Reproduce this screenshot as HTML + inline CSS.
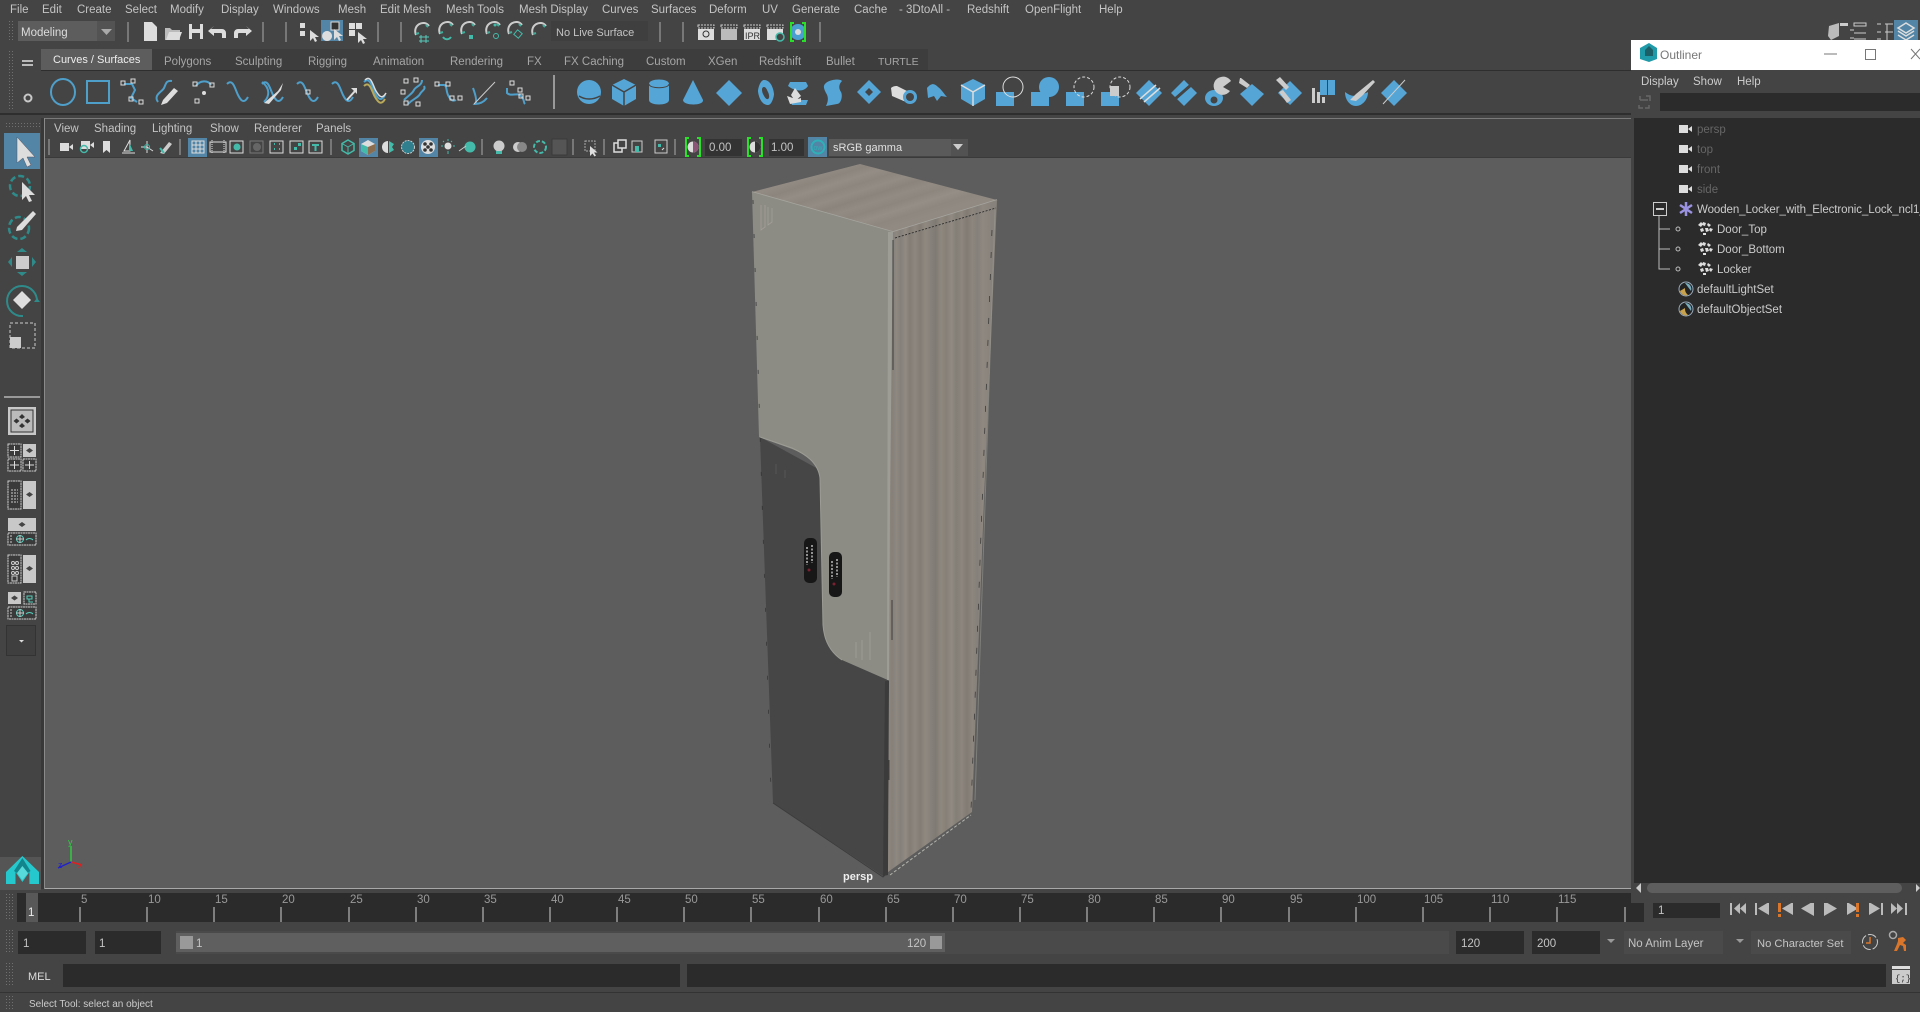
<!DOCTYPE html>
<html><head><meta charset="utf-8"><title>Maya</title>
<style>
html,body{margin:0;padding:0;width:1920px;height:1012px;overflow:hidden;background:#444}
body{position:relative;font-family:"Liberation Sans",sans-serif;font-size:11.5px;color:#c4c4c4}
.b{position:absolute}
.t{position:absolute;white-space:nowrap;line-height:14px}
.f{position:absolute;background:#2b2b2b}
.n{color:#a6a6a6}
svg{position:absolute;left:0;top:0}
</style></head><body>

<!-- viewport -->
<div class="b" style="left:45px;top:158px;width:1586px;height:730px;background:#5d5d5d"></div>
<div class="b" style="left:45px;top:888px;width:1586px;height:1px;background:#a8a8a8"></div>
<div class="b" style="left:44px;top:118px;width:1587px;height:1px;background:#7a7a7a"></div>
<div class="b" style="left:44px;top:118px;width:1px;height:771px;background:#8a8a8a"></div>
<div class="b" style="left:41px;top:118px;width:3px;height:771px;background:#383838"></div>
<div class="b" style="left:45px;top:157px;width:1586px;height:1px;background:#3a3a3a"></div>
<div class="b" style="left:0;top:857px;width:41px;height:33px;background:#555"></div>

<!-- shelf tab row -->
<div class="b" style="left:152px;top:49px;width:776px;height:21px;background:#3d3d3d"></div>
<div class="b" style="left:41px;top:49px;width:111px;height:21px;background:#5d5d5d"></div>
<div class="b" style="left:41px;top:70px;width:1590px;height:1px;background:#2e2e2e"></div>
<div class="b" style="left:0;top:113px;width:1631px;height:2px;background:#2e2e2e"></div>
<div class="b" style="left:4px;top:133px;width:36px;height:36px;background:#5285a6"></div>
<div class="b" style="left:321px;top:20px;width:22px;height:21px;background:#5285a6"></div>
<div class="b" style="left:188px;top:138px;width:19px;height:19px;background:#5285a6"></div>
<div class="b" style="left:359px;top:138px;width:19px;height:19px;background:#5285a6"></div>
<div class="b" style="left:419px;top:138px;width:19px;height:19px;background:#5285a6"></div>
<div class="b" style="left:808px;top:137px;width:19px;height:20px;background:#5285a6"></div>
<div class="b" style="left:1894px;top:20px;width:24px;height:20px;background:#5285a6"></div>

<!-- menu -->
<span class="t" style="left:10px;top:3px">File</span>
<span class="t" style="left:42px;top:3px">Edit</span>
<span class="t" style="left:77px;top:3px">Create</span>
<span class="t" style="left:125px;top:3px">Select</span>
<span class="t" style="left:170px;top:3px">Modify</span>
<span class="t" style="left:221px;top:3px">Display</span>
<span class="t" style="left:273px;top:3px">Windows</span>
<span class="t" style="left:338px;top:3px">Mesh</span>
<span class="t" style="left:380px;top:3px">Edit Mesh</span>
<span class="t" style="left:446px;top:3px">Mesh Tools</span>
<span class="t" style="left:519px;top:3px">Mesh Display</span>
<span class="t" style="left:602px;top:3px">Curves</span>
<span class="t" style="left:651px;top:3px">Surfaces</span>
<span class="t" style="left:709px;top:3px">Deform</span>
<span class="t" style="left:762px;top:3px">UV</span>
<span class="t" style="left:792px;top:3px">Generate</span>
<span class="t" style="left:854px;top:3px">Cache</span>
<span class="t" style="left:899px;top:3px">- 3DtoAll -</span>
<span class="t" style="left:967px;top:3px">Redshift</span>
<span class="t" style="left:1025px;top:3px">OpenFlight</span>
<span class="t" style="left:1099px;top:3px">Help</span>

<!-- status line widgets -->
<div class="b" style="left:18px;top:21px;width:79px;height:20px;background:#5d5d5d"></div>
<div class="b" style="left:97px;top:21px;width:18px;height:20px;background:#535353"></div>
<span class="t" style="left:21px;top:26px;color:#ddd">Modeling</span>
<div class="b" style="left:551px;top:21px;width:97px;height:20px;background:#3f3f3f"></div>
<span class="t" style="left:556px;top:26px;font-size:11px">No Live Surface</span>

<!-- tabs -->
<span class="t" style="left:53px;top:53px;color:#eee;font-size:11px">Curves / Surfaces</span>
<span class="t n" style="left:164px;top:55px">Polygons</span>
<span class="t n" style="left:235px;top:55px">Sculpting</span>
<span class="t n" style="left:308px;top:55px">Rigging</span>
<span class="t n" style="left:373px;top:55px">Animation</span>
<span class="t n" style="left:450px;top:55px">Rendering</span>
<span class="t n" style="left:527px;top:55px">FX</span>
<span class="t n" style="left:564px;top:55px">FX Caching</span>
<span class="t n" style="left:646px;top:55px">Custom</span>
<span class="t n" style="left:708px;top:55px">XGen</span>
<span class="t n" style="left:759px;top:55px">Redshift</span>
<span class="t n" style="left:826px;top:55px">Bullet</span>
<span class="t n" style="left:878px;top:55px;font-size:10.5px">TURTLE</span>

<!-- panel menu -->
<span class="t" style="left:54px;top:122px">View</span>
<span class="t" style="left:94px;top:122px">Shading</span>
<span class="t" style="left:152px;top:122px">Lighting</span>
<span class="t" style="left:210px;top:122px">Show</span>
<span class="t" style="left:254px;top:122px">Renderer</span>
<span class="t" style="left:316px;top:122px">Panels</span>

<!-- panel toolbar fields -->
<div class="f" style="left:705px;top:139px;width:37px;height:17px;background:#333"></div>
<span class="t" style="left:709px;top:141px">0.00</span>
<div class="f" style="left:769px;top:139px;width:35px;height:17px;background:#333"></div>
<span class="t" style="left:771px;top:141px">1.00</span>
<div class="b" style="left:829px;top:139px;width:122px;height:17px;background:#5a5a5a"></div>
<div class="b" style="left:951px;top:139px;width:17px;height:17px;background:#525252"></div>
<span class="t" style="left:833px;top:141px;color:#e0e0e0;font-size:11px">sRGB gamma</span>

<!-- timeline -->
<div class="f" style="left:17px;top:893px;width:1627px;height:29px"></div>
<div class="b" style="left:26px;top:893px;width:12px;height:29px;background:#585858"></div>
<span class="t" style="left:28px;top:906px;color:#eee">1</span>

<svg width="1920" height="1012" viewBox="0 0 1920 1012" font-family="Liberation Sans, sans-serif">
<defs>
<pattern id="dots" width="3" height="3" patternUnits="userSpaceOnUse"><rect width="1" height="1" fill="#707070"/></pattern>
<linearGradient id="wood" gradientUnits="userSpaceOnUse" x1="888" y1="0" x2="992" y2="0">
<stop offset="0" stop-color="#8f8880"/><stop offset=".04" stop-color="#86807a"/><stop offset=".08" stop-color="#8e8880"/><stop offset=".12" stop-color="#85807a"/><stop offset=".17" stop-color="#918a83"/><stop offset=".21" stop-color="#837d76"/><stop offset=".26" stop-color="#8e877f"/><stop offset=".31" stop-color="#827c75"/><stop offset=".36" stop-color="#8f8980"/><stop offset=".41" stop-color="#86817a"/><stop offset=".46" stop-color="#7f7a73"/><stop offset=".51" stop-color="#8e887f"/><stop offset=".56" stop-color="#868078"/><stop offset=".61" stop-color="#908a82"/><stop offset=".66" stop-color="#837e76"/><stop offset=".71" stop-color="#8d867e"/><stop offset=".76" stop-color="#817b74"/><stop offset=".81" stop-color="#8c867e"/><stop offset=".86" stop-color="#85807a"/><stop offset=".91" stop-color="#8f8880"/><stop offset="1" stop-color="#87827b"/>
</linearGradient>
<linearGradient id="topw" gradientUnits="userSpaceOnUse" x1="846" y1="165" x2="868" y2="235">
<stop offset="0" stop-color="#928b83"/><stop offset=".1" stop-color="#8b857d"/><stop offset=".2" stop-color="#948d85"/><stop offset=".3" stop-color="#8c867e"/><stop offset=".4" stop-color="#938c84"/><stop offset=".5" stop-color="#8a847c"/><stop offset=".6" stop-color="#928b83"/><stop offset=".7" stop-color="#8c867e"/><stop offset=".8" stop-color="#958e86"/><stop offset=".9" stop-color="#8d877f"/><stop offset="1" stop-color="#918a82"/>
</linearGradient>
<g id="cam"><rect x="-6" y="-4" width="9" height="8" fill="#ddd"/><path d="M3 0l4-3v6z" fill="#ddd"/></g>
<g id="sq"><rect x="-2" y="-2" width="4" height="4" fill="none" stroke="#ddd"/></g>
<g id="wave"><path d="M-11 -8C-5 -14 -3 -3 0 3S6 12 10 5" fill="none" stroke="#4f9fcb" stroke-width="2"/></g>
<g id="mag"><path d="M-6 4C-10 -6 2 -12 7 -5" fill="none" stroke="#ccc" stroke-width="2"/><path d="M-6 3l3-1M4 -6l2 2" stroke="#4a9" stroke-width="2"/></g>
<g id="clap"><rect x="-8" y="-8" width="16" height="3" fill="none" stroke="#ccc" stroke-dasharray="2 1"/><rect x="-8" y="-4" width="16" height="11" fill="#ddd"/></g>
<g id="mesh"><path d="M-7 -4l3-3 2 2-2 3zM-2 -7l3 1-1 3-3-1zM3 -6l3 2-2 2-2-2zM-5 0l3-1 1 3-3 1zM0 -1l3 0 1 3-3 1zM5 -1l3 1-2 3-2-2zM-2 4l3 0 0 2-3 0z" fill="#ddd"/></g>
<g id="setic"><circle r="7" fill="#222" stroke="#9ab" stroke-width="1"/><path d="M-6 2a6 6 0 0 0 8 4 8 8 0 0 1-3-7z" fill="#c9a24d"/><path d="M-1 -6a6 6 0 0 1 6 8z" fill="#7ab"/></g>
<g id="brk"><path d="M-4 -9h-3v18h3M4 -9h3v18h-3" fill="none" stroke="#2be02b" stroke-width="2"/></g>
</defs>

<!-- grips -->
<g fill="url(#dots)">
<rect x="7" y="20" width="8" height="22"/><rect x="7" y="50" width="8" height="60"/>
<rect x="4" y="123" width="36" height="5"/><rect x="6" y="893" width="8" height="28"/><rect x="6" y="930" width="8" height="24"/><rect x="6" y="962" width="8" height="25"/><rect x="6" y="995" width="8" height="14"/>
</g>
<rect x="22" y="60" width="11" height="2" fill="#bbb"/><rect x="22" y="64" width="11" height="2" fill="#bbb"/>
<circle cx="28" cy="98" r="3.5" fill="none" stroke="#c8c8c8" stroke-width="2"/>

<!-- status icons -->
<path d="M101 29h11l-5.500 6z" fill="#aaa"/>
<g stroke="#777" stroke-width="2"><path d="M128 22v20M263 22v20M286 22v20M378 22v20M401 22v20M660 22v20M683 22v20M820 22v20"/></g>
<path d="M144 22h8l5 5v14h-13z" fill="#ddd"/>
<path d="M165 28h5l2 2h8v10h-15z" fill="#bbb"/><path d="M166 40l3-8h13l-3 8z" fill="#ddd"/>
<path d="M189 24h14v15h-14z" fill="#ddd"/><rect x="192" y="24" width="8" height="5" fill="#444"/><rect x="192" y="33" width="8" height="6" fill="#444"/>
<path d="M211 29h11a4 4 0 0 1 4 4v5h-4v-4a1 1 0 0 0-1-1h-7v3l-6-5 6-5z" fill="#ddd"/>
<path d="M249 29h-11a4 4 0 0 0-4 4v5h4v-4a1 1 0 0 1 1-1h7v3l6-5-6-5z" fill="#ddd"/>
<g fill="#ddd"><rect x="300" y="23" width="5" height="5"/><rect x="300" y="31" width="5" height="5"/><path d="M310 30v11l3-3 2 4 2-1-2-4h4z"/>
<path d="M327 31a5 5 0 1 0 .1 0z"/><path d="M331 22h8v8h-8z" fill="#333" stroke="#ddd"/><path d="M334 29v11l3-3 2 4 2-1-2-4h4z"/>
<rect x="349" y="23" width="6" height="6"/><rect x="356" y="23" width="6" height="6"/><rect x="349" y="30" width="6" height="6"/><path d="M358 32v11l3-3 2 4 2-1-2-4h4z"/></g>
<use href="#mag" x="422" y="31"/><use href="#mag" x="446" y="30"/><use href="#mag" x="468" y="30"/><use href="#mag" x="493" y="30"/><use href="#mag" x="515" y="30"/><use href="#mag" x="539" y="31"/>
<path d="M419 37h10M419 41h10M421 35v8M426 35v8" stroke="#5cb" fill="none"/>
<path d="M443 37c2 3 6 3 8 0" stroke="#4ba" stroke-width="2" fill="none"/><rect x="469" y="35" width="4" height="4" fill="#4ba"/><circle cx="496" cy="36" r="2.500" fill="none" stroke="#4ba"/><circle cx="495" cy="25" r="1.500" fill="#4ba"/><rect x="515" y="31" width="6" height="6" fill="none" stroke="#4ba" transform="rotate(40 518 34)"/>
<use href="#clap" x="706" y="33"/><use href="#clap" x="729" y="33"/><use href="#clap" x="752" y="33"/><use href="#clap" x="775" y="33"/>
<circle cx="706" cy="34" r="3" fill="none" stroke="#333"/><text x="745" y="39" font-size="9" fill="#333">IPR</text>
<rect x="721" y="29" width="16" height="11" fill="#bbb"/>
<circle cx="780" cy="37" r="4" fill="#444" stroke="#4ba" stroke-width="1.500"/>
<circle cx="798" cy="32" r="8" fill="#4a9fd0"/><circle cx="798" cy="32" r="3" fill="#ddd"/><use href="#brk" x="798" y="32"/>

<!-- top right icons -->
<path d="M1829 26l10-3v13l-8 4-3-4z" fill="#bbb"/><path d="M1840 23h8v3h-8z" fill="#ccc"/>
<g stroke="#ccc" fill="none"><path d="M1854 26h12v-3h-12zM1854 33h12M1854 39h12M1850 30h4M1850 38h4"/><path d="M1877 24h4M1877 32h4M1877 39h4M1885 24h8M1885 32h8M1887 24v16"/></g>
<path d="M1906 23l8 5-8 5-8-5zM1898 31l8 5 8-5M1898 35l8 5 8-5" fill="none" stroke="#ddd" stroke-width="1.500"/>

<!-- shelf: curves -->
<ellipse cx="63" cy="92" rx="12" ry="13" fill="none" stroke="#4f9fcb" stroke-width="2"/>
<rect x="87" y="81" width="22" height="22" fill="none" stroke="#4f9fcb" stroke-width="2"/>
<path d="M124 84h8l3 6-4 8 6 4" fill="none" stroke="#4f9fcb" stroke-width="2"/><use href="#sq" x="123" y="83"/><use href="#sq" x="133" y="81"/><use href="#sq" x="131" y="99"/><use href="#sq" x="141" y="102"/>
<path d="M158 102c-5-7 4-10 6-14s2-8 8-7" fill="none" stroke="#4f9fcb" stroke-width="2"/><path d="M163 100l11-12 4 3-11 12-6 2z" fill="#ddd"/>
<path d="M196 86c4-6 12-6 15-1" fill="none" stroke="#4f9fcb" stroke-width="2"/><use href="#sq" x="195" y="84"/><use href="#sq" x="212" y="85"/><use href="#sq" x="197" y="101"/><circle cx="204" cy="93" r="2" fill="#ddd"/>
<use href="#wave" x="238" y="92"/>
<use href="#wave" x="273" y="92"/><path d="M264 103l14-12 5-8-2 7-12 14z" fill="#ddd"/><path d="M262 82c8 6 8 14 2 20" fill="none" stroke="#4f9fcb" stroke-width="2"/>
<use href="#wave" x="308" y="92"/><use href="#sq" x="308" y="92"/>
<use href="#wave" x="343" y="92"/><path d="M347 100l8-9" stroke="#ddd" stroke-width="2"/><path d="M351 88h6v6z" fill="#ddd"/>
<use href="#wave" x="375" y="90"/><path d="M364 86C370 80 372 92 375 97S381 106 385 99" fill="none" stroke="#b9a95a" stroke-width="2"/><path d="M365 80C371 74 373 86 376 91S382 100 386 93" fill="none" stroke="#ddd" stroke-width="1.500"/>
<path d="M404 100c6-6 8-6 10-10s8-4 8-10M408 104c6-6 10-6 12-10s6-4 4-8" fill="none" stroke="#4f9fcb" stroke-width="2"/><use href="#sq" x="406" y="81"/><use href="#sq" x="416" y="80"/><use href="#sq" x="403" y="92"/><use href="#sq" x="406" y="103"/><use href="#sq" x="418" y="104"/>
<path d="M438 85h6c3 0 2 6 4 10s4 7 8 5" fill="none" stroke="#4f9fcb" stroke-width="2"/><use href="#sq" x="437" y="84"/><use href="#sq" x="448" y="84"/><use href="#sq" x="452" y="98"/><use href="#sq" x="460" y="98"/>
<path d="M473 88c3 8 4 14 2 16 4 0 8-1 12-6" fill="none" stroke="#4f9fcb" stroke-width="2"/><path d="M474 104L495 82" stroke="#ccc"/>
<path d="M507 88v5c4 4 10-1 14 3 4 4 2 6 4 8" fill="none" stroke="#4f9fcb" stroke-width="2"/><use href="#sq" x="512" y="83"/><use href="#sq" x="520" y="90"/><use href="#sq" x="521" y="96"/><use href="#sq" x="528" y="98"/>
<rect x="553" y="75" width="2" height="34" fill="#999"/>

<!-- shelf: polys -->
<g fill="#55a6d6">
<circle cx="589" cy="92" r="12"/>
<path d="M624 79l12 6v14l-12 7-12-7V85z"/>
<path d="M649 84c0-6 20-6 20 0v16c0 6-20 6-20 0z"/>
<path d="M693 80l10 20c1 6-20 6-20 0z"/>
<path d="M729 80l13 13-13 13-13-13z"/>
<path fill-rule="evenodd" d="M764 80c8 0 10 12 10 14s-2 11-6 11c-8 0-10-12-10-14s2-11 6-11zm0 7c-3 0-2 5-1 7s3 6 5 5 1-5 0-7-2-5-4-5z"/>
<path d="M790 82h16l2 4c-4 6-12 6-20 0zM790 100h18l-2 5h-14z"/>
<path d="M825 84c3-4 14-6 17-3-4 4-3 8-1 11 2 4 0 12-4 12l-11 2c3-6 2-10 0-13-2-4-3-7-1-9z"/>
<path d="M869 80l12 12-12 12-12-12zm0 8l-4 4 4 4 4-4z" fill-rule="evenodd"/>
<path d="M891 88a8 8 0 0 1 6-2l14 7-5 9-14-6z" fill="#ddd"/><circle cx="910" cy="97" r="7"/>
<path d="M927 88c5-6 8-4 11-1 4 3 6 7 9 10l-6-1-4 5-3-5-6 2z"/>
<path d="M973 79l12 6v14l-12 7-12-7V85z"/>
<rect x="996" y="92" width="18" height="14"/><rect x="1031" y="92" width="18" height="14"/><circle cx="1049" cy="87" r="10"/><rect x="1066" y="92" width="18" height="14"/><rect x="1101" y="92" width="18" height="14"/>
<path d="M1149 80l13 13-13 13-13-13z"/><path d="M1184 80l13 13-13 13-13-13z"/>
<ellipse cx="1214" cy="98" rx="9" ry="8"/>
<path d="M1252 84l12 10-12 12-12-12z"/><path d="M1290 81l12 12-12 12-12-12z"/>
<rect x="1320" y="80" width="7" height="15"/><rect x="1328" y="80" width="7" height="15"/>
<path d="M1345 92c4 3 8 5 12 3 2 0 7-1 11-3 0 8-6 14-12 14s-11-6-11-14z"/>
<path d="M1394 80l13 13-13 13-13-13z"/>
</g>
<g fill="#444"><circle cx="910" cy="97" r="4"/><circle cx="1214" cy="100" r="3.500"/></g>
<g fill="none" stroke="#ddd">
<path d="M579 96c6 4 14 4 21 0" stroke="#444" stroke-width="1.500"/>
<path d="M624 92v14M624 92l-12-7M624 92l12-7" stroke="#444" stroke-width="1.500"/>
<path d="M649 84c0 5 20 5 20 0" stroke="#444"/>
<path d="M973 92v14M973 92l-12-7M973 92l12-7" stroke-width="1.500"/>
<circle cx="1013" cy="87" r="10"/>
<circle cx="1084" cy="87" r="10" stroke-dasharray="3 2"/><circle cx="1120" cy="87" r="10" stroke-dasharray="3 2"/>
<path d="M1140 99l16-14M1144 102l16-14" stroke-width="1.500"/>
<path d="M1175 99l16-14" stroke="#444" stroke-width="3"/>
<path d="M1383 104l22-24" stroke="#ccc"/>
</g>
<rect x="1110" y="86" width="9" height="10" fill="#ccc"/>
<path d="M795 88l6 8-6 5-4-6zM787 96c6 2 10 4 14 2v4l-11 2z" fill="#ddd"/>
<path fill-rule="evenodd" d="M1221 77a9 9 0 1 0 9 14l-7-4 8-6a9 9 0 0 0-10-4z" fill="#ccc"/>
<path d="M1241 78l9 7-3 3-8-5 1-5z" fill="#ccc"/>
<path d="M1276 80l10 10 3-3-9-10zM1279 92l8 11 4-3-8-10z" fill="#ccc"/>
<g fill="#ccc"><rect x="1312" y="88" width="3" height="15"/><rect x="1317" y="92" width="3" height="11"/><rect x="1322" y="97" width="3" height="6"/><path d="M1373 80l-17 14-6 6 6 1 6-5 13-14z"/></g>

<!-- panel tb icons -->
<g stroke="#777" stroke-width="2"><path d="M49 139v16M180 139v16M331 139v16M482 139v16M573 139v16M604 139v16M675 139v16"/></g>
<use href="#cam" x="66" y="147"/><use href="#cam" x="87" y="145"/><circle cx="84" cy="149" r="3.500" fill="none" stroke="#4ba" stroke-width="1.500"/>
<path d="M103 141h7v12l-3.500-3-3.500 3z" fill="#ddd"/>
<path d="M122 153h13M124 151l6-11v11z" fill="none" stroke="#ddd"/><path d="M129 142l4 9h-4z" fill="#4ba"/>
<path d="M147 141v12M147 147h-6M147 147l6 4" stroke="#ddd" fill="none"/><circle cx="147" cy="147" r="2.500" fill="none" stroke="#4ba"/>
<path d="M160 153l9-11 3 2-8 10z" fill="#ccc"/><path d="M160 148l4 5" stroke="#4ba" stroke-width="2"/>
<g fill="none" stroke="#ddd"><rect x="192" y="141" width="12" height="12"/><path d="M196 141v12M200 141v12M192 145h12M192 149h12"/>
<rect x="210" y="142" width="16" height="10"/><path d="M212 140v14M224 140v14" stroke-dasharray="1 1"/>
<rect x="230" y="141" width="13" height="12"/><rect x="250" y="141" width="13" height="12" stroke="#777"/>
<rect x="270" y="141" width="13" height="12"/><rect x="290" y="141" width="13" height="12"/><rect x="309" y="141" width="13" height="12"/></g>
<circle cx="237" cy="147" r="3.500" fill="#4ba"/><circle cx="257" cy="147" r="4" fill="#666"/>
<path d="M274 144h1M279 144h1M274 149h1M279 149h1" stroke="#4ba" stroke-width="2"/><rect x="294" y="147" width="3" height="3" fill="#4ba"/><rect x="298" y="143" width="3" height="3" fill="#4ba"/>
<path d="M312 144h7v2h-2.500v5h-2v-5H312z" fill="#4ba"/>
<path d="M348 140l6 3.500v7l-6 3.500-6-3.500v-7z" fill="none" stroke="#4ba" stroke-width="1.500"/><path d="M348 147v7M348 147l-6-3.500M348 147l6-3.500" stroke="#4ba"/>
<path d="M368 140l7 4v7l-7 4-7-4v-7z" fill="#ddd"/><path d="M368 147v8l-7-4v-7z" fill="#4ba"/><path d="M368 147v8l7-4v-7z" fill="#8a6c4e"/>
<path d="M388 141a6 6 0 0 0 0 12z" fill="#ddd"/><path d="M389 141l5 3-2 3 2 3-5 3z" fill="#4ba"/>
<circle cx="408" cy="147" r="6.500" fill="#2f7f8f" stroke="#ccc" stroke-dasharray="2 1"/>
<circle cx="428" cy="147" r="7" fill="#ddd"/><g fill="#333"><circle cx="425" cy="144" r="1.800"/><circle cx="431" cy="144" r="1.800"/><circle cx="428" cy="147" r="1.800"/><circle cx="425" cy="150" r="1.800"/><circle cx="431" cy="150" r="1.800"/></g>
<circle cx="448" cy="146" r="3.500" fill="#ddd"/><path d="M441 146h2M453 146h2M448 139v2M448 151v3M443 141l1 1M452 141l-1 1" stroke="#4ba"/>
<circle cx="470" cy="147" r="5.500" fill="#4ba"/><path d="M459 151l7-5" stroke="#ccc"/>
<circle cx="499" cy="146" r="5.500" fill="#ccc"/><rect x="496" y="151" width="6" height="3" fill="#4ba"/>
<circle cx="518" cy="147" r="5" fill="#ccc"/><circle cx="522" cy="147" r="5" fill="#888"/>
<circle cx="540" cy="147" r="6" fill="none" stroke="#4ba" stroke-width="2" stroke-dasharray="4 2"/>
<rect x="552" y="139" width="15" height="16" fill="#555" stroke="#3a3a3a"/>
<rect x="585" y="141" width="10" height="10" fill="none" stroke="#aaa" stroke-dasharray="2 1"/><path d="M590 146v10l2.500-2.500 2 3 1.500-1-2-3h3.500z" fill="#ddd"/>
<rect x="614" y="143" width="8" height="9" fill="none" stroke="#ddd" stroke-width="1.500"/><rect x="618" y="140" width="8" height="8" fill="#444" stroke="#ddd" stroke-width="1.500"/>
<rect x="632" y="141" width="10" height="11" fill="none" stroke="#ccc"/><rect x="635" y="146" width="4" height="6" fill="#4ba"/>
<rect x="655" y="140" width="12" height="13" fill="none" stroke="#ccc"/><rect x="658" y="144" width="3" height="3" fill="#4ba"/><path d="M662 150l2-2" stroke="#ddd"/>
<circle cx="693" cy="147" r="5.500" fill="#ddd"/><path d="M693 141.500v11a5.500 5.500 0 0 0 0-11" fill="#8a5577"/><use href="#brk" x="693" y="147"/>
<circle cx="755" cy="147" r="5.500" fill="#ddd"/><path d="M755 141.500v11a5.500 5.500 0 0 0 0-11" fill="#333"/><use href="#brk" x="755" y="147"/>
<circle cx="818" cy="147" r="6.500" fill="none" stroke="#2fb0b8" stroke-width="2"/><text x="813.500" y="150" font-size="7" fill="#2fb0b8">ow</text>
<path d="M953 144h10l-5 6z" fill="#ccc"/>

<!-- tool box -->
<path d="M17 137v26l6-5 4 9 4-2-4-8h8z" fill="#ddd" stroke="#556" stroke-width=".5"/>
<ellipse cx="20" cy="186" rx="10" ry="10" fill="none" stroke="#2f8a8a" stroke-width="2.500" stroke-dasharray="6 3"/>
<path d="M22 182v18l4-4 3 6 3-1-3-6h6z" fill="#ddd"/>
<ellipse cx="19" cy="228" rx="10" ry="11" fill="none" stroke="#2f8a8a" stroke-width="2.500" stroke-dasharray="6 3"/>
<path d="M17 227l16-16 3 3-14 16-6 1z" fill="#ddd"/>
<rect x="16" y="256" width="13" height="13" fill="#ccc"/>
<g fill="#2f8a8a"><path d="M22 248l5 4h-10zM22 276l5-4h-10zM8 262l4-5v10zM36 262l-4-5v10z"/></g>
<path d="M22 291l9 9-9 9-9-9z" fill="#ddd"/><path d="M37 302a15 15 0 1 0-14 14" fill="none" stroke="#2f8a8a" stroke-width="2"/><path d="M34 302h6l-3-4z" fill="#2f8a8a"/>
<rect x="10" y="323" width="25" height="25" fill="none" stroke="#ccc" stroke-dasharray="3 2"/><rect x="10" y="337" width="11" height="11" fill="#ccc"/>
<rect x="4" y="396" width="36" height="2" fill="#999"/>

<!-- layout icons -->
<rect x="8" y="407" width="28" height="28" fill="#c8c8c8"/><rect x="11" y="410" width="22" height="22" fill="#bbb" stroke="#333"/>
<g fill="#333"><path d="M22 414l3 3-3 2-3-2zM22 423l3 3-3 2-3-2zM16.500 418.500l3 2.500-3 2.500-3-2.500zM27.500 418.500l3 2.500-3 2.500-3-2.500z"/></g>
<g fill="#3a3a3a" stroke="#ccc" stroke-dasharray="2 .5">
<rect x="8" y="444" width="13" height="13"/><rect x="8" y="459" width="13" height="12"/><rect x="23" y="459" width="13" height="12"/>
<rect x="8" y="481" width="13" height="28"/><rect x="8" y="533" width="28" height="12"/><rect x="8" y="555" width="13" height="28"/>
<rect x="24" y="592" width="12" height="12"/><rect x="8" y="607" width="28" height="12"/></g>
<g fill="#c8c8c8"><rect x="23" y="444" width="13" height="13"/><rect x="23" y="481" width="13" height="28"/><rect x="8" y="518" width="28" height="13"/><rect x="23" y="555" width="13" height="28"/><rect x="8" y="592" width="13" height="12"/></g>
<g fill="#444"><path d="M29.500 448l3.500 2.500-3.500 2.500-3.500-2.500zM29.500 492l3.500 2.500-3.500 2.500-3.500-2.500zM22 522l3.500 2.500-3.500 2.500-3.500-2.500zM29.500 566l3.500 2.500-3.500 2.500-3.500-2.500zM14.500 595.500l3.500 2.500-3.500 2.500-3.500-2.500z"/></g>
<path d="M14.500 446v9M10 450.500h9M14.500 461v8M10 465h9M29.500 461v8M25 465h9" stroke="#ddd"/>
<path d="M11 490h7M11 493h7M11 496h7M11 499h7M11 502h7" stroke="#ccc" stroke-dasharray="2 1"/>
<g fill="none" stroke="#ccc"><circle cx="13" cy="563" r="1.500"/><circle cx="17" cy="563" r="1.500"/><circle cx="13" cy="568" r="1.500"/><circle cx="17" cy="568" r="1.500"/><circle cx="13" cy="573" r="1.500"/><circle cx="17" cy="573" r="1.500"/><rect x="12" y="576" width="5" height="5"/><circle cx="20" cy="539" r="3.500" stroke="#5cb"/><path d="M20 535v8M16 539h8"/><path d="M26 540c2-2 5-2 7 0" stroke="#5cb"/><circle cx="20" cy="613" r="3.500" stroke="#5cb"/><path d="M20 609v8M16 613h8"/><path d="M26 614c2-2 5-2 7 0" stroke="#5cb"/><path d="M27 596h5v3h-5zM29 599v3h4" stroke="#5cb"/></g>
<path d="M10 536h2M10 539h2M10 542h2M10 610h2M10 613h2M10 616h2" stroke="#ccc"/>
<rect x="6.500" y="625.500" width="29" height="30" fill="#3f3f3f" stroke="#333"/>
<path d="M19 640h5l-2.500 2.500z" fill="#ddd"/>

<!-- logo -->
<path d="M22.400 856L6 872V884H15.500V872L22.400 882L29.400 872V884H39V872Z" fill="#25c8cc"/>
<path d="M22.400 858L14 871L22.400 877L30.500 871Z" fill="#12858c"/>
<path d="M22.400 866L17 873L22.400 880L28 873Z" fill="#58dada"/>

<!-- locker -->
<path d="M752 192L860 164L997 200L893 232Z" fill="url(#topw)"/>
<path d="M752 192L893 232L997 200" fill="none" stroke="#a5a59e" stroke-width="1.500"/>
<path d="M760 437L820 470L889 490V680L883 876L773 803Z" fill="#464646"/>
<path d="M752 192L893 232L890 681L842 660C830 652 824 640 823 625L820 478C818 462 805 454 792 449L759 437Z" fill="#8c8c85"/>
<path d="M760 437L792 448C805 454 818 462 820 478L823 625C824 640 830 652 842 660" fill="none" stroke="#9c9c94" stroke-width="1"/>
<path d="M888 232L893 232L891 680L887 680Z" fill="#9d9d96"/>
<path d="M885 681L889 681L888 875L883 876Z" fill="#3b3b3b"/>
<path d="M893 232L997 200L984 500L972 812L888 872L890 500Z" fill="url(#wood)"/>
<path d="M773 803L883 877L888 872" fill="none" stroke="#3c3c3c"/>
<path d="M890 875L971 815" fill="none" stroke="#b5b5ae" stroke-dasharray="3 2"/>
<path d="M895 238L996 208" stroke="#222" stroke-width=".8" stroke-dasharray="2 1.500" fill="none"/>
<path d="M893 240V370M892 600V640M889 760V780" stroke="#222" stroke-width=".7" fill="none"/>
<path d="M992 230L971 810" stroke="#333" stroke-width=".7" stroke-dasharray="6 16" fill="none"/>
<path d="M995 210L975 800" stroke="#9a9a94" stroke-opacity=".55" fill="none"/>
<path d="M753 200L762 500L771 790" stroke="#333" stroke-width=".7" stroke-dasharray="4 30" fill="none"/>
<path d="M761 205v25l4-3v-22M768 207v18l4-3v-14" stroke="#a39f97" stroke-width=".8" fill="none"/>
<path d="M856 642v16M862 640v20M870 632v28" stroke="#a39f97" stroke-width=".8" fill="none"/>
<path d="M776 464v10M785 470v8" stroke="#555" fill="none"/>
<rect x="804" y="538" width="13" height="45" rx="5" fill="#171717"/><rect x="829" y="552" width="13" height="45" rx="5" fill="#171717"/>
<g stroke="#bbb" stroke-width="1.500" stroke-dasharray="2 1.500"><path d="M807 547v18M812 545v18M832 561v18M837 559v18"/></g>
<circle cx="809" cy="570" r="1.500" fill="#7a2030"/><circle cx="834" cy="584" r="1.500" fill="#7a2030"/>
<text x="843" y="880" font-size="11" font-weight="bold" fill="#eee">persp</text>

<!-- axis -->
<path d="M71 862V846" stroke="#2ecc40" stroke-width="1.500"/><text x="68" y="845" font-size="9" fill="#2ecc40">y</text>
<path d="M71 862L82 865" stroke="#d22" stroke-width="1.500"/><text x="78" y="868" font-size="9" fill="#d22">x</text>
<path d="M71 862L58 868" stroke="#22c" stroke-width="1.500"/><text x="58" y="868" font-size="9" fill="#22c">z</text>

<!-- timeline ticks -->
<g stroke="#999" stroke-width="1.500"><path d="M80 907v15M147 907v15M214 907v15M281 907v15M349 907v15M416 907v15M483 907v15M550 907v15M617 907v15M684 907v15M751 907v15M819 907v15M886 907v15M953 907v15M1020 907v15M1087 907v15M1154 907v15M1221 907v15M1289 907v15M1356 907v15M1423 907v15M1490 907v15M1557 907v15M1625 907v15"/></g>
<g font-size="11.500" fill="#999">
<text x="81" y="903">5</text><text x="148" y="903">10</text><text x="215" y="903">15</text><text x="282" y="903">20</text><text x="350" y="903">25</text><text x="417" y="903">30</text><text x="484" y="903">35</text><text x="551" y="903">40</text><text x="618" y="903">45</text><text x="685" y="903">50</text><text x="752" y="903">55</text><text x="820" y="903">60</text><text x="887" y="903">65</text><text x="954" y="903">70</text><text x="1021" y="903">75</text><text x="1088" y="903">80</text><text x="1155" y="903">85</text><text x="1222" y="903">90</text><text x="1290" y="903">95</text><text x="1357" y="903">100</text><text x="1424" y="903">105</text><text x="1491" y="903">110</text><text x="1558" y="903">115</text>
</g>
</svg>

<!-- range row -->
<div class="f" style="left:18px;top:931px;width:68px;height:23px"></div><span class="t" style="left:23px;top:937px">1</span>
<div class="f" style="left:95px;top:931px;width:66px;height:23px"></div><span class="t" style="left:99px;top:937px">1</span>
<div class="b" style="left:176px;top:931px;width:1273px;height:23px;background:#4a4a4a"></div>
<div class="b" style="left:176px;top:933px;width:769px;height:19px;background:#5f5f5f"></div>
<div class="b" style="left:180px;top:936px;width:13px;height:13px;background:#999"></div>
<div class="b" style="left:930px;top:936px;width:12px;height:13px;background:#999"></div>
<span class="t" style="left:196px;top:937px">1</span>
<span class="t" style="left:907px;top:937px">120</span>
<div class="f" style="left:1456px;top:931px;width:68px;height:23px"></div><span class="t" style="left:1461px;top:937px">120</span>
<div class="f" style="left:1532px;top:931px;width:68px;height:23px"></div><span class="t" style="left:1537px;top:937px">200</span>
<div class="b" style="left:1624px;top:931px;width:99px;height:23px;background:#4a4a4a"></div><span class="t" style="left:1628px;top:937px">No Anim Layer</span>
<div class="b" style="left:1751px;top:931px;width:100px;height:23px;background:#4a4a4a"></div><span class="t" style="left:1757px;top:937px;font-size:11.2px">No Character Set</span>

<!-- MEL -->
<span class="t" style="left:28px;top:970px;color:#ddd;font-size:11px">MEL</span>
<div class="f" style="left:63px;top:964px;width:617px;height:23px"></div>
<div class="f" style="left:687px;top:964px;width:1199px;height:23px"></div>
<div class="b" style="left:0;top:992px;width:1920px;height:1px;background:#333"></div>
<span class="t" style="left:29px;top:998px;font-size:10px;color:#ccc">Select Tool: select an object</span>

<!-- playback field -->
<div class="f" style="left:1653px;top:903px;width:67px;height:15px"></div><span class="t" style="left:1658px;top:904px">1</span>

<svg width="1920" height="1012" viewBox="0 0 1920 1012">
<g fill="#bbb">
<path d="M1730 902h2v13h-2zM1740 903l-6 5.500 6 5.500zM1746 903l-6 5.500 6 5.500z"/>
<path d="M1755 902h2v13h-2zM1769 902l-11 6.500 11 6.500z"/>
<path d="M1793 902l-11 6.500 11 6.500z"/>
<path d="M1814 901l-13 7.500 13 7.500z"/><path d="M1824 901l13 7.500-13 7.500z"/>
<path d="M1847 902l11 6.500-11 6.500z"/>
<path d="M1869 902l11 6.500-11 6.500zM1881 902h2v13h-2z"/>
<path d="M1891 903l6 5.500-6 5.500zM1897 903l6 5.500-6 5.500zM1905 902h2v13h-2z"/>
</g>
<path d="M1778 901h3v11h-3zM1778 914h3v3h-3zM1856 901h3v11h-3zM1856 914h3v3h-3z" fill="#d9762b"/>
<path d="M1611 943l-4-4h8z M1740 943l-4-4h8z" fill="#999"/>
<circle cx="1870" cy="942" r="7.500" fill="none" stroke="#ccc" stroke-dasharray="9 2"/><path d="M1870 937v6h-4" stroke="#d9762b" stroke-width="1.500" fill="none"/>
<circle cx="1893" cy="935" r="3.500" fill="none" stroke="#aaa" stroke-width="1.500"/>
<path d="M1898 938l5-1 3 3-3 3 3 2v6h-2l-1-5-3-1-3 6h-3l3-7 1-3z" fill="#d9762b"/>
<rect x="1892" y="966" width="18" height="3" fill="#ddd"/><rect x="1892" y="970" width="18" height="14" fill="#ccc"/>
<text x="1895" y="981" font-family="Liberation Mono, monospace" font-size="9" fill="#333">{;}</text>
</svg>

<!-- outliner -->
<div class="b" style="left:1631px;top:40px;width:289px;height:863px;background:#444"></div>
<div class="b" style="left:1631px;top:40px;width:289px;height:30px;background:#fff"></div>
<span class="t" style="left:1660px;top:48px;font-size:12px;color:#777">Outliner</span>
<span class="t" style="left:1641px;top:75px;color:#ccc">Display</span>
<span class="t" style="left:1693px;top:75px;color:#ccc">Show</span>
<span class="t" style="left:1737px;top:75px;color:#ccc">Help</span>
<div class="f" style="left:1660px;top:93px;width:260px;height:18px"></div>
<div class="f" style="left:1634px;top:118px;width:286px;height:765px"></div>
<span class="t" style="left:1697px;top:123px;color:#666">persp</span>
<span class="t" style="left:1697px;top:143px;color:#666">top</span>
<span class="t" style="left:1697px;top:163px;color:#666">front</span>
<span class="t" style="left:1697px;top:183px;color:#666">side</span>
<span class="t" style="left:1697px;top:203px;color:#ccc;letter-spacing:-.08px">Wooden_Locker_with_Electronic_Lock_ncl1_</span>
<span class="t" style="left:1717px;top:223px;color:#ccc">Door_Top</span>
<span class="t" style="left:1717px;top:243px;color:#ccc">Door_Bottom</span>
<span class="t" style="left:1717px;top:263px;color:#ccc">Locker</span>
<span class="t" style="left:1697px;top:283px;color:#ccc">defaultLightSet</span>
<span class="t" style="left:1697px;top:303px;color:#ccc">defaultObjectSet</span>
<div class="b" style="left:1647px;top:883px;width:255px;height:10px;border-radius:5px;background:#5e5e5e"></div>

<svg width="1920" height="1012" viewBox="0 0 1920 1012">
<path d="M1640 48l9-5 8 5v11l-8 3-9-3z" fill="#1f9aa8"/><path d="M1645 50l4-4 4 4v6h-8z" fill="#1d5f66"/>
<path d="M1824 54h13" stroke="#777"/><rect x="1865.500" y="49.500" width="10" height="10" fill="none" stroke="#777"/>
<path d="M1911 49l9 10M1920 49l-9 10" stroke="#777"/>
<path d="M1640 100h8M1646 96h4v5M1639 105v3h4M1649 105v3h-4M1640 96v4" fill="none" stroke="#666" stroke-width="1.500"/>
<use href="#cam" x="1685" y="129"/><use href="#cam" x="1685" y="149"/><use href="#cam" x="1685" y="169"/><use href="#cam" x="1685" y="189"/>
<rect x="1653.500" y="202.500" width="13" height="13" fill="none" stroke="#ccc"/><rect x="1656" y="208" width="8" height="2" fill="#ccc"/>
<path d="M1686 202v14M1680 205l12 8M1692 205l-12 8" stroke="#9a92e0" stroke-width="2.500"/>
<path d="M1659 216v53h11M1659 229h11M1659 249h11" fill="none" stroke="#bbb"/>
<circle cx="1678" cy="229" r="2" fill="#2b2b2b" stroke="#bbb"/><circle cx="1678" cy="249" r="2" fill="#2b2b2b" stroke="#bbb"/><circle cx="1678" cy="269" r="2" fill="#2b2b2b" stroke="#bbb"/>
<use href="#mesh" x="1705" y="229"/><use href="#mesh" x="1705" y="249"/><use href="#mesh" x="1705" y="269"/>
<use href="#setic" x="1686" y="289"/><use href="#setic" x="1686" y="309"/>
<path d="M1641 883l-5 5 5 5zM1916 884l4 4-4 4z" fill="#ccc"/>
</svg>
</body></html>
